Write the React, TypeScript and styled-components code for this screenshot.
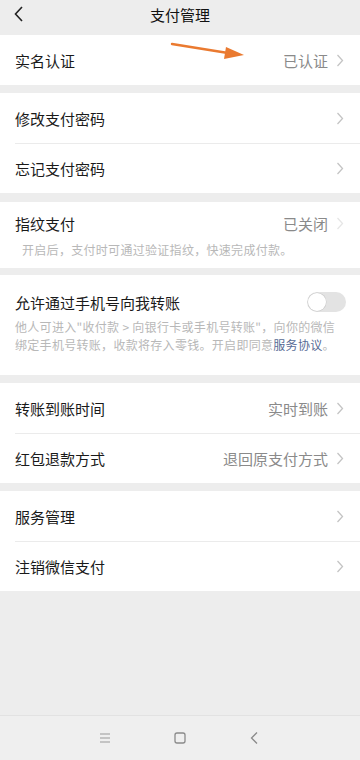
import React, { FC } from "react";
import styled, { createGlobalStyle } from "styled-components";

const GlobalStyle = createGlobalStyle`
  body {
    margin: 0;
    background: #ededed;
    font-family: "Noto Sans CJK SC", "Noto Sans", sans-serif;
    color: #1a1a1a;
  }
`;

const Page = styled.div`
  position: relative;
  display: flex;
  flex-direction: column;
  min-height: 760px;
  background: #ededed;
`;

const Header = styled.div`
  position: relative;
  height: 35px;
  box-sizing: border-box;
  padding-bottom: 6px;
  display: flex;
  align-items: center;
  justify-content: center;
  font-size: 15px;
  color: #111;
`;

const BackButton = styled.div`
  position: absolute;
  left: 12px;
  top: 5px;
  width: 14px;
  height: 18px;
`;

const Section = styled.div<{ gap?: number }>`
  background: #fff;
  margin-top: ${({ gap = 8 }) => gap}px;
`;

const Row = styled.div`
  display: flex;
  padding-left: 15px;
`;

const RowBody = styled.div<{ divided?: boolean }>`
  flex: 1;
  height: 50px;
  display: flex;
  align-items: center;
  padding-right: 16px;
  border-top: ${({ divided }) => (divided ? "1px solid #ebebeb" : "none")};
  box-sizing: border-box;
`;

const Label = styled.div`
  flex: 1;
  font-size: 15px;
  color: #1a1a1a;
`;

const Value = styled.div`
  font-size: 15px;
  color: #8a8a8a;
  margin-right: 8px;
`;

const Chevron = styled.svg`
  width: 8px;
  height: 13px;
  flex: none;
`;

const Block = styled.div<{ top: number; bottom: number }>`
  padding: ${({ top, bottom }) => `${top}px 16px ${bottom}px 15px`};
`;

const BlockHead = styled.div`
  display: flex;
  align-items: center;
  height: 22px;
`;

const Desc = styled.div<{ indent?: number; gap: number }>`
  margin-top: ${({ gap }) => gap}px;
  padding-left: ${({ indent = 0 }) => indent}px;
  font-size: 12px;
  line-height: 18px;
  letter-spacing: 0.3px;
  color: #b8b8b8;
  white-space: nowrap;
`;

const Link = styled.span`
  color: #576b95;
`;

const Toggle = styled.div`
  width: 39px;
  height: 20px;
  border-radius: 10px;
  background: #e3e3e3;
  position: relative;
  margin-right: -2px;
`;

const Knob = styled.div`
  position: absolute;
  left: 1px;
  top: 1px;
  width: 18px;
  height: 18px;
  border-radius: 50%;
  background: #fff;
  box-shadow: 0 0 0 0.5px #c8c8c8;
`;

const Spacer = styled.div`
  flex: 1;
`;

const NavBar = styled.div`
  height: 44px;
  border-top: 1px solid #e2e2e2;
  background: #efefef;
  display: flex;
  align-items: center;
  justify-content: center;
  gap: 59px;
`;

const NavIcon = styled.svg`
  width: 16px;
  height: 16px;
`;

const Annotation = styled.svg`
  position: absolute;
  left: 170px;
  top: 40px;
  width: 76px;
  height: 22px;
`;

const Arrow: FC<{ color?: string }> = ({ color = "#c4c4c4" }) => (
  <Chevron viewBox="0 0 8 13">
    <path d="M1.5 1 L6.5 6.5 L1.5 12" fill="none" stroke={color} strokeWidth="1.3" />
  </Chevron>
);

type ItemProps = { label: string; value?: string; divided?: boolean };

const Item: FC<ItemProps> = ({ label, value, divided }) => (
  <Row>
    <RowBody divided={divided}>
      <Label>{label}</Label>
      {value && <Value>{value}</Value>}
      <Arrow />
    </RowBody>
  </Row>
);

const App: FC = () => (
  <Page>
    <GlobalStyle />
    <Header>
      <BackButton>
        <svg width="14" height="18" viewBox="0 0 14 18">
          <path d="M10 2 L3.5 9 L10 16" fill="none" stroke="#222" strokeWidth="1.6" />
        </svg>
      </BackButton>
      支付管理
    </Header>

    <Section gap={0}>
      <Item label="实名认证" value="已认证" />
    </Section>

    <Section>
      <Item label="修改支付密码" />
      <Item label="忘记支付密码" divided />
    </Section>

    <Section gap={9}>
      <Block top={10} bottom={9}>
        <BlockHead>
          <Label>指纹支付</Label>
          <Value>已关闭</Value>
          <Arrow color="#e6e6e6" />
        </BlockHead>
        <Desc gap={7} indent={7}>开启后，支付时可通过验证指纹，快速完成付款。</Desc>
      </Block>
    </Section>

    <Section gap={7}>
      <Block top={16} bottom={21}>
        <BlockHead>
          <Label>允许通过手机号向我转账</Label>
          <Toggle>
            <Knob />
          </Toggle>
        </BlockHead>
        <Desc gap={5}>
          他人可进入"收付款 &gt; 向银行卡或手机号转账"，向你的微信
          <br />
          绑定手机号转账，收款将存入零钱。开启即同意<Link>服务协议</Link>。
        </Desc>
      </Block>
    </Section>

    <Section>
      <Item label="转账到账时间" value="实时到账" />
      <Item label="红包退款方式" value="退回原支付方式" divided />
    </Section>

    <Section>
      <Item label="服务管理" />
      <Item label="注销微信支付" divided />
    </Section>

    <Spacer />

    <NavBar>
      <NavIcon viewBox="0 0 16 16">
        <path d="M3 4 H13 M3 8 H13 M3 12 H13" stroke="#9a9a9a" strokeWidth="1.2" />
      </NavIcon>
      <NavIcon viewBox="0 0 16 16">
        <rect x="3" y="3" width="10" height="10" rx="2" fill="none" stroke="#8a8a8a" strokeWidth="1.3" />
      </NavIcon>
      <NavIcon viewBox="0 0 16 16">
        <path d="M10 2.5 L4.5 8 L10 13.5" fill="none" stroke="#8a8a8a" strokeWidth="1.3" />
      </NavIcon>
    </NavBar>

    <Annotation viewBox="0 0 76 22">
      <path d="M2 4 L58 13" stroke="#ea7a30" strokeWidth="2.4" strokeLinecap="round" />
      <path d="M56 7 L74 15 L54 19 Z" fill="#ea7a30" />
    </Annotation>
  </Page>
);

export default App;
